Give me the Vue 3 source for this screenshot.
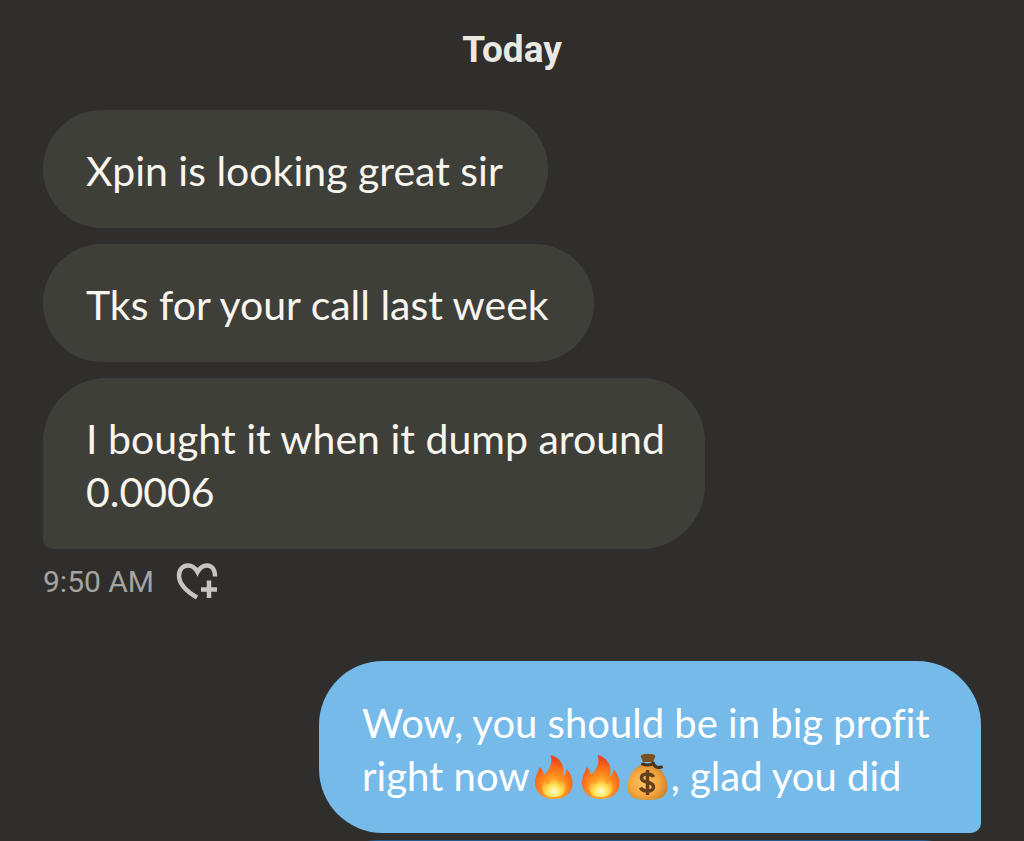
<script setup>
const received = [
  { id: 1, text: 'Xpin is looking great sir' },
  { id: 2, text: 'Tks for your call last week' },
  { id: 3, text: 'I bought it when it dump around 0.0006', last: true }
]
</script>

<template>
  <main class="chat">
    <h1 class="day">Today</h1>

    <section class="group">
      <p v-for="m in received" :key="m.id" class="bubble" :class="{ tail: m.last }">{{ m.text }}</p>
    </section>

    <div class="meta">
      <time>9:50 AM</time>
      <button class="react" type="button" aria-label="Add reaction">
        <svg viewBox="0 0 42 38" width="42" height="38" fill="none" stroke="currentColor" stroke-width="4.500">
          <path d="M21 35.500C10 29 3 22 3 13.500C3 7.500 7 3.500 12 3.500C16 3.500 19 5.500 21.500 10C24 5.500 27 3.500 31 3.500C36 3.500 39 7.500 39 14.500" />
          <path d="M33 18.500V36M25 27.500H41" />
        </svg>
      </button>
    </div>

    <section class="group sent">
      <p class="bubble mine">
        Wow, you should be in big profit right now<svg v-for="n in 2" :key="n" class="emoji" viewBox="0 0 46 50" role="img" aria-label="fire">
          <defs>
            <radialGradient :id="'flame' + n" cx="50%" cy="78%" r="68%">
              <stop offset="0" stop-color="#ffc52e" />
              <stop offset="0.4" stop-color="#ff9821" />
              <stop offset="0.75" stop-color="#f96a1b" />
              <stop offset="1" stop-color="#e94a1c" />
            </radialGradient>
            <radialGradient :id="'core' + n" cx="50%" cy="76%" r="60%">
              <stop offset="0" stop-color="#fffbd0" />
              <stop offset="0.45" stop-color="#ffe65a" />
              <stop offset="1" stop-color="#ff9d24" />
            </radialGradient>
          </defs>
          <path :fill="`url(#flame${n})`" d="M20 3C28 5 33 11 33 19C33 21 32.500 23 33 24C35 23 36 20 36 17C40 21 42 27 42 32C42 41 34 47 23.500 47C12 47 4.500 40 4.500 31C4.500 24 8 20 9 15C12 17 13 20 13.500 23C18 19 23 12 20 3Z" />
          <path :fill="`url(#core${n})`" d="M22 22C27 26 27 29 29 32C31 31 32 30 32 28C35 31 36 34 35 38C34 42 30 45 23.500 45C16 45 12 42 11.500 37C11 33 13 31 13 29C15 30 16 32 17 33C20 30 23 27 22 22Z" />
        </svg><svg class="emoji" viewBox="0 0 46 50" role="img" aria-label="money bag">
          <defs>
            <radialGradient id="bag" cx="42%" cy="52%" r="60%">
              <stop offset="0" stop-color="#ffc568" />
              <stop offset="0.6" stop-color="#f6a63f" />
              <stop offset="1" stop-color="#c9852d" />
            </radialGradient>
          </defs>
          <path fill="url(#bag)" d="M17 13C8 16 3 26 3 35C3 44 9 48 23 48C37 48 43 44 43 35C43 26 38 17 29 13Z" />
          <path fill="#79521f" d="M16 4C18 1 29 1 31 4L28.500 10H18.500Z" />
          <path fill="none" stroke="#4d3418" stroke-width="3" stroke-linecap="round" d="M18 12C22 13.500 26 13.500 29 11M29 12C31 16 34 16 37 15" />
          <path fill="none" stroke="#63401c" stroke-width="3.500" d="M29 25C27 21 17 20.500 17 26C17 32 29 28.500 29 35C29 40.500 18 40 16 35.500M23 18V43" />
        </svg>, glad you did
      </p>
      <div class="next" aria-hidden="true"></div>
    </section>
  </main>
</template>

<style>
body {
  margin: 0;
  background: #2f2e2c;
}
</style>

<style scoped>
.chat {
  box-sizing: border-box;
  height: 100vh;
  overflow: hidden;
  padding: 30px 43px 0;
  background: #2f2e2c;
  color: #f7f5ee;
  font-family: Roboto, "Open Sans", sans-serif;
}
.day {
  margin: 0 0 40px;
  text-align: center;
  font-size: 37px;
  line-height: 40px;
  font-weight: 700;
  color: #eae8e2;
}
.group {
  display: flex;
  flex-direction: column;
  align-items: flex-start;
  gap: 16px;
}
.bubble {
  box-sizing: border-box;
  margin: 0;
  max-width: 662px;
  padding: 34px 45px 31px 43px;
  border-radius: 64px;
  background: #3f3f3a;
  font-family: Lato, "Open Sans", sans-serif;
  font-size: 41px;
  line-height: 53px;
  font-variant-ligatures: none;
}
.tail {
  padding-right: 38px;
  border-bottom-left-radius: 10px;
}
.meta {
  display: flex;
  align-items: center;
  gap: 22px;
  height: 64px;
  margin-bottom: 48px;
  color: #a5a4a1;
  font-size: 30px;
}
.react {
  display: flex;
  padding: 0;
  border: 0;
  background: none;
  color: #c6c5c2;
}
.sent {
  align-items: flex-end;
  gap: 7px;
}
.mine {
  padding: 36px 38px 30px 43px;
  background: #76baea;
  color: #fff;
  border-bottom-right-radius: 10px;
  font-size: 40px;
}
.emoji {
  width: 47px;
  height: 50px;
  vertical-align: -1px;
  margin: -10px 0;
}
.next {
  box-sizing: border-box;
  width: 662px;
  max-width: 100%;
  height: 118px;
  border-radius: 64px;
  background: #24598a;
}
</style>
